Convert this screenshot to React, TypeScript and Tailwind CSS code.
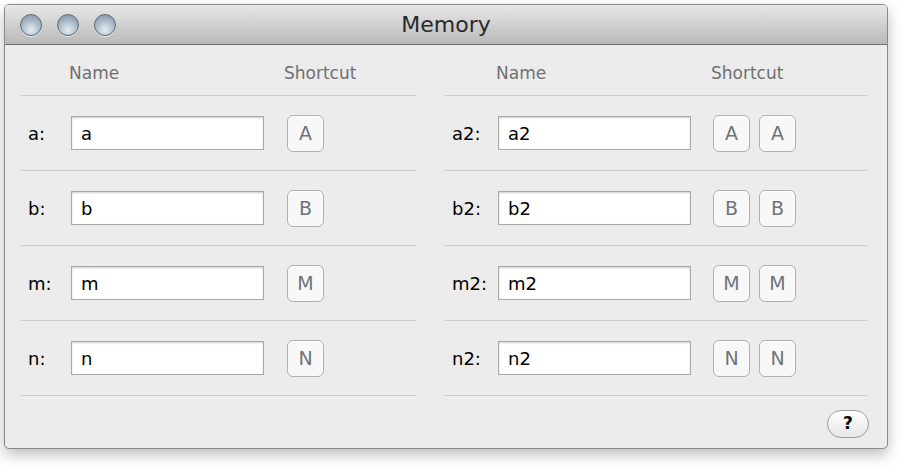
import React from "react";

const Btn = ({ c }: { c: string }) => (
  <div className="w-[37px] h-[37px] rounded-[6px] border border-[#b0b0b0] bg-[#f8f8f8] shadow-[inset_0_1px_0_#fff] flex items-center justify-center text-[19px] text-[#6f747c]">{c}</div>
);

const Row = ({ label, value, keys, left }: { label: string; value: string; keys: string[]; left: boolean }) => (
  <div className="h-[75px] border-b border-[#cfcfcf] flex items-center">
    <div className={left ? "w-[50px] pl-[7px] text-[18px] text-black" : "w-[54px] pl-[8px] text-[18px] text-black"}>{label}</div>
    <div className="w-[193px] h-[34px] border border-[#a9a9a9] bg-white shadow-[inset_0_1px_2px_rgba(0,0,0,0.2)] flex items-center px-[9px] text-[18px] text-black">{value}</div>
    <div className={left ? "ml-[23px] flex gap-[9px]" : "ml-[22px] flex gap-[9px]"}>{keys.map((k, i) => <Btn key={i} c={k} />)}</div>
  </div>
);

const Col = ({ left }: { left: boolean }) => {
  const rows = left
    ? [["a:", "a", ["A"]], ["b:", "b", ["B"]], ["m:", "m", ["M"]], ["n:", "n", ["N"]]]
    : [["a2:", "a2", ["A", "A"]], ["b2:", "b2", ["B", "B"]], ["m2:", "m2", ["M", "M"]], ["n2:", "n2", ["N", "N"]]];
  return (
    <div className={left ? "w-[395px]" : "w-[423px]"}>
      <div className="h-[51px] border-b border-[#cfcfcf] flex items-end pb-[9px] text-[17px] text-[#707070]">
        <div className={left ? "ml-[48px] w-[215px]" : "ml-[52px] w-[215px]"}>Name</div>
        <div>Shortcut</div>
      </div>
      {rows.map((r: any, i) => <Row key={i} label={r[0]} value={r[1]} keys={r[2]} left={left} />)}
    </div>
  );
};

export default function App() {
  return (
    <div className="w-[914px] h-[474px] bg-white pt-[4px] pl-[4px]" style={{ fontFamily: '"DejaVu Sans", "Lucida Grande", sans-serif' }}>
      <div className="w-[884px] h-[445px] rounded-[5px] overflow-hidden bg-[#ececec] border border-[#8a8a8a] shadow-[0_6px_14px_rgba(0,0,0,0.25)] flex flex-col">
        <div className="h-[40px] bg-gradient-to-b from-[#e8e8e8] to-[#b9b9b9] border-b border-[#6f6f6f] flex items-center relative shrink-0">
          <div className="flex gap-[15px] ml-[15px]">
            {[0, 1, 2].map(i => (
              <div key={i} className="w-[22px] h-[22px] rounded-full border border-[#5f6b78] bg-[radial-gradient(circle_at_50%_75%,#e6eef5,#a2b1c0_60%,#7c8a99)] shadow-[0_1px_0_rgba(255,255,255,0.6)]" />
            ))}
          </div>
          <div className="absolute inset-0 flex items-center justify-center text-[22px] text-[#2a2a2a]">Memory</div>
        </div>
        <div className="flex-1 relative">
          <div className="flex ml-[16px] gap-[28px]">
            <Col left={true} />
            <Col left={false} />
          </div>
          <div className="absolute right-[18px] bottom-[10px] w-[42px] h-[28px] rounded-full border border-[#9c9c9c] bg-gradient-to-b from-white to-[#e6e6e6] flex items-center justify-center text-[17px] font-bold text-black">?</div>
        </div>
      </div>
    </div>
  );
}
